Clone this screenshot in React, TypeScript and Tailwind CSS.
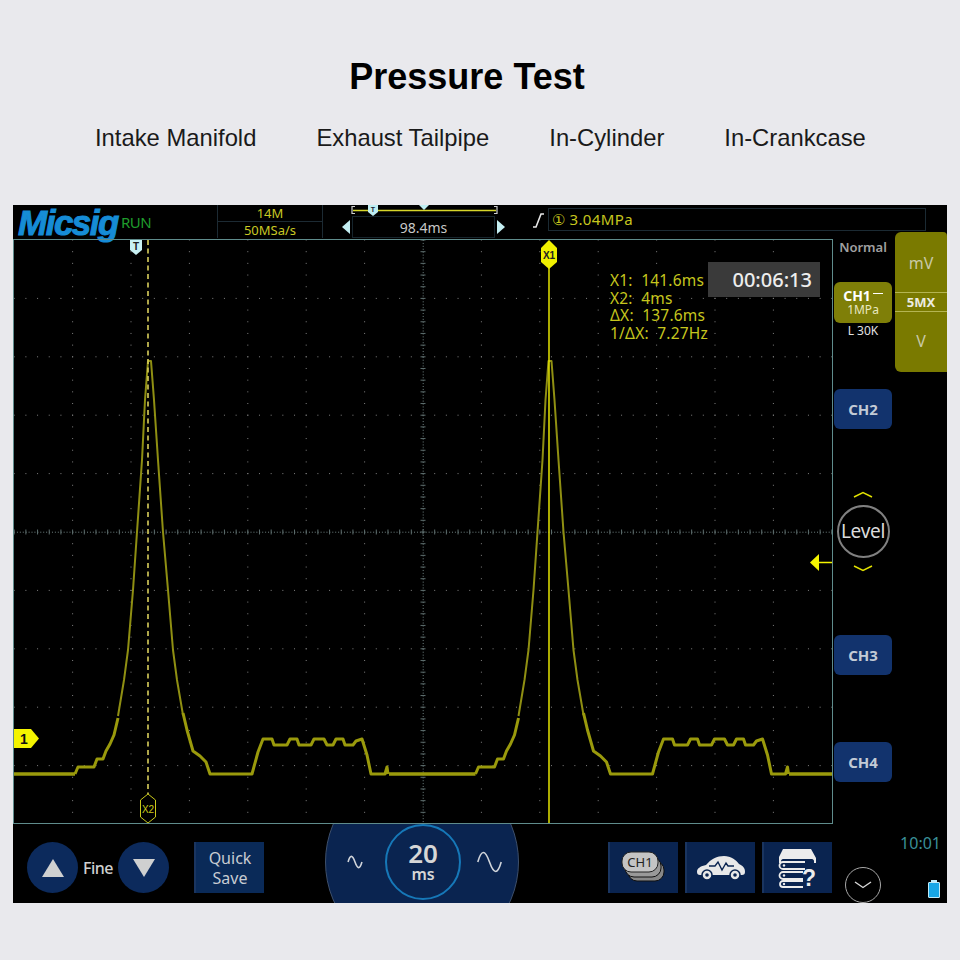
import React from 'react'

const FONT = { fontFamily: '"Noto Sans", "Open Sans", sans-serif' }

// grid positions in page coordinates, the plot svg uses the same numbers
const STEP = 58.4
const CELL = STEP / 5
const COLS = [-6, -5, -4, -3, -2, -1, 0, 1, 2, 3, 4, 5, 6].map((k) => 423 + k * STEP)
const ROWS = [1, 2, 3, 4, 5, 6, 7, 8, 9].map((k) => 240 + k * STEP)

const gridDots = () => {
  const dots: { x: number; y: number }[] = []
  COLS.forEach((x) => {
    if (x === 423) return
    for (let y = 240; y < 823; y += CELL) dots.push({ x, y })
  })
  ROWS.forEach((y) => {
    if (y === 532) return
    for (let i = -35; i <= 35; i++) dots.push({ x: 423 + i * CELL, y })
  })
  return dots
}

const centreTicks = () => {
  const out: React.ReactElement[] = []
  for (let x = 14; x < 832; x += 2.92) out.push(<rect key={'h' + x} x={x} y={531.7} width={1} height={1} fill="#6f8080" />)
  for (let y = 240; y < 823; y += 2.92) out.push(<rect key={'v' + y} x={422.7} y={y} width={1} height={1} fill="#6f8080" />)
  for (let i = -35; i <= 35; i++) out.push(<rect key={'th' + i} x={423 + i * CELL - 0.5} y={529.5} width={1} height={5} fill="#5d6d6d" />)
  for (let i = -25; i <= 25; i++) out.push(<rect key={'tv' + i} x={420.5} y={532 + i * CELL - 0.5} width={5} height={1} fill="#5d6d6d" />)
  return out
}

const LOW_LEFT: [number, number][] = [[75, 774], [78, 767], [94, 767], [97, 759], [103, 759], [106, 751], [110, 744], [114, 735], [118, 718]]
const PEAK: [number, number][] = [
  [118, 716], [124, 680], [128, 650], [133, 590], [137, 532], [142, 460], [145, 400], [148, 361], [151, 361], [154, 400],
  [158, 460], [163, 532], [168, 590], [173, 650], [177, 680], [183, 715],
]
const LOW_RIGHT: [number, number][] = [
  [183, 713], [187, 730], [193, 751], [200, 756], [206, 762], [210, 774], [252, 774], [258, 752], [263, 739], [272, 739],
  [274, 745], [287, 745], [290, 739], [297, 739], [299, 745], [311, 745], [314, 739], [324, 739], [327, 745], [333, 745],
  [336, 739], [343, 739], [345, 745], [353, 745], [356, 741], [362, 739], [367, 755], [371, 774], [385, 774], [387, 767],
  [388, 774],
]

const pts = (list: [number, number][], dx = 0) => list.map(([x, y]) => `${x + dx},${y}`).join(' ')

function Trace() {
  return (
    <g fill="none" strokeLinejoin="round">
      <polyline points="14,774 75,774" stroke="#9a9a0c" strokeWidth={3.5} />
      {[0, 400.5].map((dx) => (
        <g key={dx}>
          <polyline points={pts(LOW_LEFT, dx)} stroke="#9a9a0c" strokeWidth={3} />
          <polyline points={pts(PEAK, dx)} stroke="#8f8f12" strokeWidth={2} />
          <polyline points={pts(LOW_RIGHT, dx)} stroke="#9a9a0c" strokeWidth={3} />
        </g>
      ))}
      <polyline points="389,774 475.5,774" stroke="#9a9a0c" strokeWidth={3.5} />
      <polyline points="789,774 832,774" stroke="#9a9a0c" strokeWidth={3.5} />
    </g>
  )
}

function PlotOverlay() {
  return (
    <svg className="absolute inset-0 w-[818px] h-[583px]" viewBox="14 240 818 583">
      {gridDots().map((d, i) => (
        <rect key={i} x={d.x - 0.5} y={d.y - 0.5} width={1} height={1} fill="#808080" />
      ))}
      {centreTicks()}
      <Trace />

      {/* cursor T / X2 */}
      <line x1={148} y1={240} x2={148} y2={794} stroke="#d9cf5c" strokeWidth={1.6} strokeDasharray="5 3.5" />
      <path d="M130 240h12v10l-6 5l-6-5z" fill="#c9f1f4" />
      <text x={136} y={250} textAnchor="middle" fontSize={10} fontWeight={700} fill="#222" fontFamily="Liberation Sans">T</text>
      <path d="M148 794l7.5 6v17l-7.5 6l-7.5-6v-17z" fill="#000" stroke="#c9c91a" strokeWidth={1} />
      <text x={148} y={813} textAnchor="middle" fontSize={10} fill="#c9c91a" fontFamily="Liberation Sans">X2</text>

      {/* cursor X1 */}
      <line x1={549} y1={260} x2={549} y2={823} stroke="#e6e600" strokeWidth={1.5} />
      <path d="M549 240l8 8v14l-8 7l-8-7v-14z" fill="#f0f000" />
      <text x={549} y={259} textAnchor="middle" fontSize={10} fontWeight={700} fill="#222" fontFamily="Liberation Sans">X1</text>

      {/* channel 1 marker */}
      <path d="M14 729h17l8 9.500l-8 9.500h-17z" fill="#f4f400" />
      <text x={24} y={744} textAnchor="middle" fontSize={14} fontWeight={700} fill="#111" fontFamily="Liberation Sans">1</text>

      {/* trigger level arrow */}
      <path d="M810 562.500l9-8.500v17z" fill="#f4f400" />
      <line x1={818} y1={562.500} x2={832} y2={562.500} stroke="#f4f400" strokeWidth={1.500} />
    </svg>
  )
}

function Readout() {
  return (
    <div className="absolute left-[596px] top-[32px] text-[15.5px] leading-[17.6px] tracking-[0.2px] text-[#c6c61e] whitespace-pre" style={FONT}>
      <div>X1:  141.6ms</div>
      <div>X2:  4ms</div>
      <div>ΔX:  137.6ms</div>
      <div>1/ΔX:  7.27Hz</div>
    </div>
  )
}

function TopBar() {
  return (
    <div className="flex h-[34px] shrink-0">
      <div className="flex w-[204px] items-center pl-[5px]">
        <span className="text-[35px] leading-none font-bold italic text-[#168cd6] tracking-[-1.5px] [-webkit-text-stroke:1px_#168cd6]" style={{ fontFamily: '"Liberation Sans", sans-serif' }}>
          Micsig
        </span>
        <span className="ml-[3px] mt-[1px] text-[15px] tracking-[-0.5px] text-[#1f9c2c]" style={FONT}>RUN</span>
      </div>

      <div className="flex h-[33px] w-[106px] flex-col border-x border-[#1c2a33] text-center text-[13px] leading-[16px] text-[#c9c924]" style={FONT}>
        <div className="h-[17px] border-b border-[#1c2a33]">14M</div>
        <div>50MSa/s</div>
      </div>

      <div className="ml-[18px] flex w-[165px] flex-col">
        <svg className="h-[11px] w-[165px]" viewBox="0 0 165 11">
          <path d="M14 1.500h-3v7h3M153 1.500h3v7h-3" fill="none" stroke="#cfcfcf" strokeWidth={1.200} />
          <line x1={12} y1={5.500} x2={155} y2={5.500} stroke="#d6d62a" strokeWidth={1.500} />
          <path d="M27 0h10v7l-5 4l-5-4z" fill="#bfeef2" />
          <text x={32} y={7} textAnchor="middle" fontSize={7} fontWeight={700} fill="#223" fontFamily="Liberation Sans">T</text>
          <path d="M78 0h10l-5 5z" fill="#bfeef2" />
        </svg>
        <div className="flex items-center">
          <svg className="h-[16px] w-[10px] shrink-0" viewBox="0 0 10 16"><path d="M9 1v14l-8-7z" fill="#c4eef2" /></svg>
          <div className="ml-[1px] h-[22px] w-[143px] border border-[#16242c] text-center text-[14px] leading-[21px] text-[#c8c8c8]" style={FONT}>98.4ms</div>
          <svg className="ml-[1px] h-[16px] w-[10px] shrink-0" viewBox="0 0 10 16"><path d="M1 1v14l8-7z" fill="#c4eef2" /></svg>
        </div>
      </div>

      <svg className="ml-[24px] mt-[7px] h-[17px] w-[16px] shrink-0" viewBox="0 0 16 17">
        <path d="M3 15h3l5-13h3" fill="none" stroke="#e6e6e6" strokeWidth={1.600} />
      </svg>
      <div className="ml-[2px] mt-[3px] flex h-[23px] w-[378px] items-center border border-[#1b2a33] pl-[3px] text-[15px] tracking-[0.4px] text-[#c6c61e]" style={FONT}>
        <span className="mr-[4px]">①</span>3.04MPa
      </div>
    </div>
  )
}

function ChannelButton({ label, className }: { label: string; className: string }) {
  return (
    <div className={'flex h-[40px] w-[58px] items-center justify-center rounded-md bg-[#12336d] text-[15px] font-bold text-[#c3cbd6] ' + className} style={FONT}>
      {label}
    </div>
  )
}

function SidePanel() {
  return (
    <div className="flex w-[114px] shrink-0">
      <div className="ml-[1px] flex w-[58px] flex-col items-center" style={FONT}>
        <div className="h-[16px] text-[13px] leading-[16px] font-semibold text-[#a0a0a0] whitespace-nowrap">Normal</div>
        <div className="mt-[27px] flex h-[41px] w-[58px] flex-col items-center rounded-md bg-[#7f7f08] pt-[6px] text-white">
          <div className="flex items-center text-[14px] leading-[15px] font-bold">
            CH1<span className="ml-[2px] mb-[4px] h-[1px] w-[10px] bg-white" />
          </div>
          <div className="text-[12px] leading-[14px] text-[#e8e8c0]">1MPa</div>
        </div>
        <div className="h-[15px] text-[12px] leading-[15px] text-[#e0e0e0] whitespace-nowrap">L 30K</div>
        <ChannelButton label="CH2" className="mt-[51px]" />
        <svg className="mt-[62px] h-[7px] w-[20px]" viewBox="0 0 20 7"><path d="M1 6l9-4.500l9 4.500" fill="none" stroke="#e0e000" strokeWidth={1.500} /></svg>
        <div className="mt-[7px] flex h-[53px] w-[53px] shrink-0 items-center justify-center rounded-full border-2 border-[#808080] text-[19px] tracking-[-0.3px] text-[#dcdcdc]">
          Level
        </div>
        <svg className="mt-[7px] h-[7px] w-[20px]" viewBox="0 0 20 7"><path d="M1 1l9 4.500l9-4.500" fill="none" stroke="#e0e000" strokeWidth={1.500} /></svg>
        <ChannelButton label="CH3" className="mt-[63px]" />
        <ChannelButton label="CH4" className="mt-[67px]" />
      </div>

      <div className="relative z-10 ml-[3px] -mt-[7px] flex h-[140px] w-[52px] flex-col rounded-l-md rounded-tr-sm bg-[#7a7a00] text-center" style={FONT}>
        <div className="flex h-[60px] items-center justify-center pt-[2px] text-[16px] text-[#c9c9a6]">mV</div>
        <div className="h-[20px] border-y border-[#b5b552] text-[13px] leading-[18px] font-bold text-[#ecece0]">5MX</div>
        <div className="flex flex-1 items-center justify-center pb-[3px] text-[16px] text-[#c9c9a6]">V</div>
      </div>
    </div>
  )
}

function RoundButton({ up }: { up: boolean }) {
  return (
    <div className="flex h-[51px] w-[51px] shrink-0 items-center justify-center rounded-full bg-[#0c2a5c]">
      <svg className="h-[20px] w-[24px]" viewBox="0 0 24 20">
        <path d={up ? 'M12 1l11 18h-22z' : 'M12 19l11-18h-22z'} fill="#cfd0d0" />
      </svg>
    </div>
  )
}

function SineIcon({ className }: { className: string }) {
  return (
    <svg className={className} viewBox="0 0 30 24">
      <path d="M2 12C6 -2 10 -2 15 12S24 26 28 12" fill="none" stroke="#d0d4da" strokeWidth={1.600} vectorEffect="non-scaling-stroke" />
    </svg>
  )
}

function ToolButton({ children, className }: { children: React.ReactNode; className?: string }) {
  return (
    <div className={'flex h-[51px] w-[70px] shrink-0 items-center justify-center border-l-2 border-[#1a3560] bg-[#0a2450] ' + (className || '')}>
      {children}
    </div>
  )
}

function BottomBar() {
  return (
    <div className="flex h-[79px] shrink-0 items-center overflow-hidden" style={FONT}>
      <div className="ml-[14px] mt-[8px] flex items-center">
        <RoundButton up />
        <span className="ml-[5px] mr-[4px] w-[31px] text-[16px] font-medium tracking-[-0.5px] text-[#d0d0d0]">Fine</span>
        <RoundButton up={false} />
      </div>
      <div className="ml-[25px] mt-[8px] flex h-[51px] w-[70px] shrink-0 flex-col items-center justify-center border-l-2 border-[#1a3560] bg-[#0a2a58] text-[16px] leading-[20px] text-[#c8ccd2]">
        <span>Quick</span>
        <span>Save</span>
      </div>
      <div className="ml-[61px] mb-[3px] flex h-[194px] w-[194px] shrink-0 items-center rounded-full border border-[#3d4f6b] bg-[#0a2450] pl-[21px]">
        <SineIcon className="h-[20px] w-[16px]" />
        <div className="ml-[22px] flex h-[76px] w-[76px] shrink-0 flex-col items-center justify-center rounded-full border-2 border-[#1678b8] text-[#d6d6d6]">
          <span className="text-[26px] leading-[25px] font-semibold">20</span>
          <span className="text-[16px] leading-[17px] font-semibold">ms</span>
        </div>
        <SineIcon className="ml-[15px] h-[22px] w-[27px]" />
      </div>

      <div className="ml-[89px] mt-[8px] flex gap-[7px]">
        <ToolButton>
          <svg className="h-[36px] w-[48px]" viewBox="0 0 48 36">
            <rect x="8" y="11" width="36" height="20" rx="9" fill="#888" stroke="#111" strokeWidth={1} />
            <rect x="5" y="7" width="36" height="20" rx="9" fill="#999" stroke="#111" strokeWidth={1} />
            <rect x="2" y="2" width="36" height="20" rx="9" fill="#c4c4c4" stroke="#222" strokeWidth={1} />
            <text x="20" y="17" textAnchor="middle" fontSize={13} fill="#222" fontFamily="Noto Sans">CH1</text>
          </svg>
        </ToolButton>
        <ToolButton>
          <svg className="h-[26px] w-[50px]" viewBox="0 0 50 26">
            <path d="M1 17c0-4 4-6 9-7C15 4 21 1 28 1c7 0 12 4 15 8c4 2 6 4 6 8c0 2-1 3-3 3H4c-2 0-3-1-3-3z" fill="#e8e8e8" />
            <path d="M13 11h6l3-4l4 8l4-7l2 3h6" fill="none" stroke="#0a2450" strokeWidth={1.400} />
            <circle cx="11" cy="20" r="5" fill="#e8e8e8" stroke="#0a2450" strokeWidth={1.500} />
            <circle cx="11" cy="20" r="1.800" fill="#0a2450" />
            <circle cx="39" cy="20" r="5" fill="#e8e8e8" stroke="#0a2450" strokeWidth={1.500} />
            <circle cx="39" cy="20" r="1.800" fill="#0a2450" />
          </svg>
        </ToolButton>
        <ToolButton>
          <svg className="h-[46px] w-[40px]" viewBox="0 -3 40 46" fill="none">
            <path d="M5 1h28l5 9v5h-2v-2c0-1-1-2-2-2H5c-1 0-2 1-2 2v2H1v-6z" fill="#ececec" />
            <path d="M27 14H5a3.500 3.500 0 0 0 0 7h22" stroke="#ececec" strokeWidth={1.800} />
            <path d="M25 24H5a3.500 3.500 0 0 0 0 7h20" stroke="#ececec" strokeWidth={1.800} />
            <path d="M25 33H5a3 3 0 0 0 0 6h20" stroke="#ececec" strokeWidth={1.800} />
            <circle cx="6" cy="17.500" r="1.200" fill="#ececec" />
            <circle cx="6" cy="27.500" r="1.200" fill="#ececec" />
            <circle cx="6" cy="36" r="1.200" fill="#ececec" />
            <text x="31" y="38" textAnchor="middle" fontSize={23} fontWeight={700} fill="#ececec" fontFamily="Liberation Sans">?</text>
          </svg>
        </ToolButton>
      </div>

      <div className="ml-[13px] mt-[43px] flex h-[36px] w-[36px] shrink-0 items-center justify-center rounded-full border border-[#a8a8a8]">
        <svg className="h-[8px] w-[18px]" viewBox="0 0 18 8"><path d="M1 1l8 5.500l8-5.500" fill="none" stroke="#d8d8d8" strokeWidth={1.400} /></svg>
      </div>

      <div className="ml-[18px] flex h-full w-[42px] shrink-0 flex-col items-end">
        <span className="mt-[10px] text-[16px] leading-[18px] text-[#3a8f98]">10:01</span>
        <div className="mr-[1px] mt-[28px] flex w-[12px] flex-col items-center">
          <div className="h-[2px] w-[6px] bg-[#bfeaf8]" />
          <div className="h-[16px] w-[12px] rounded-[1px] border border-[#bfeaf8] bg-[#17a6e6]" />
        </div>
      </div>
    </div>
  )
}

export default function App() {
  return (
    <div className="h-[960px] w-[960px] overflow-hidden bg-[#e9e9ed]" style={{ fontFamily: '"Liberation Sans", Arial, sans-serif' }}>
      <h1 className="pt-[57px] pr-[26px] text-center text-[36px] leading-[40px] font-bold text-black">Pressure Test</h1>
      <div className="mt-[28px] flex gap-[60px] pl-[95px] text-[23.8px] leading-[26px] text-[#1a1a1a]">
        <span>Intake Manifold</span>
        <span>Exhaust Tailpipe</span>
        <span>In-Cylinder</span>
        <span>In-Crankcase</span>
      </div>

      <div className="ml-[13px] mt-[54px] flex h-[698px] w-[934px] flex-col bg-black">
        <TopBar />
        <div className="flex h-[585px] shrink-0">
          <div className="relative h-[585px] w-[820px] shrink-0 border border-[#5f8c8c]">
            <PlotOverlay />
            <Readout />
            <div className="absolute left-[694px] top-[22px] flex h-[35px] w-[112px] items-center justify-end bg-[#3a3a3a] pr-[8px] text-[20px] font-medium text-[#ededed]" style={FONT}>
              00:06:13
            </div>
          </div>
          <SidePanel />
        </div>
        <BottomBar />
      </div>
    </div>
  )
}
